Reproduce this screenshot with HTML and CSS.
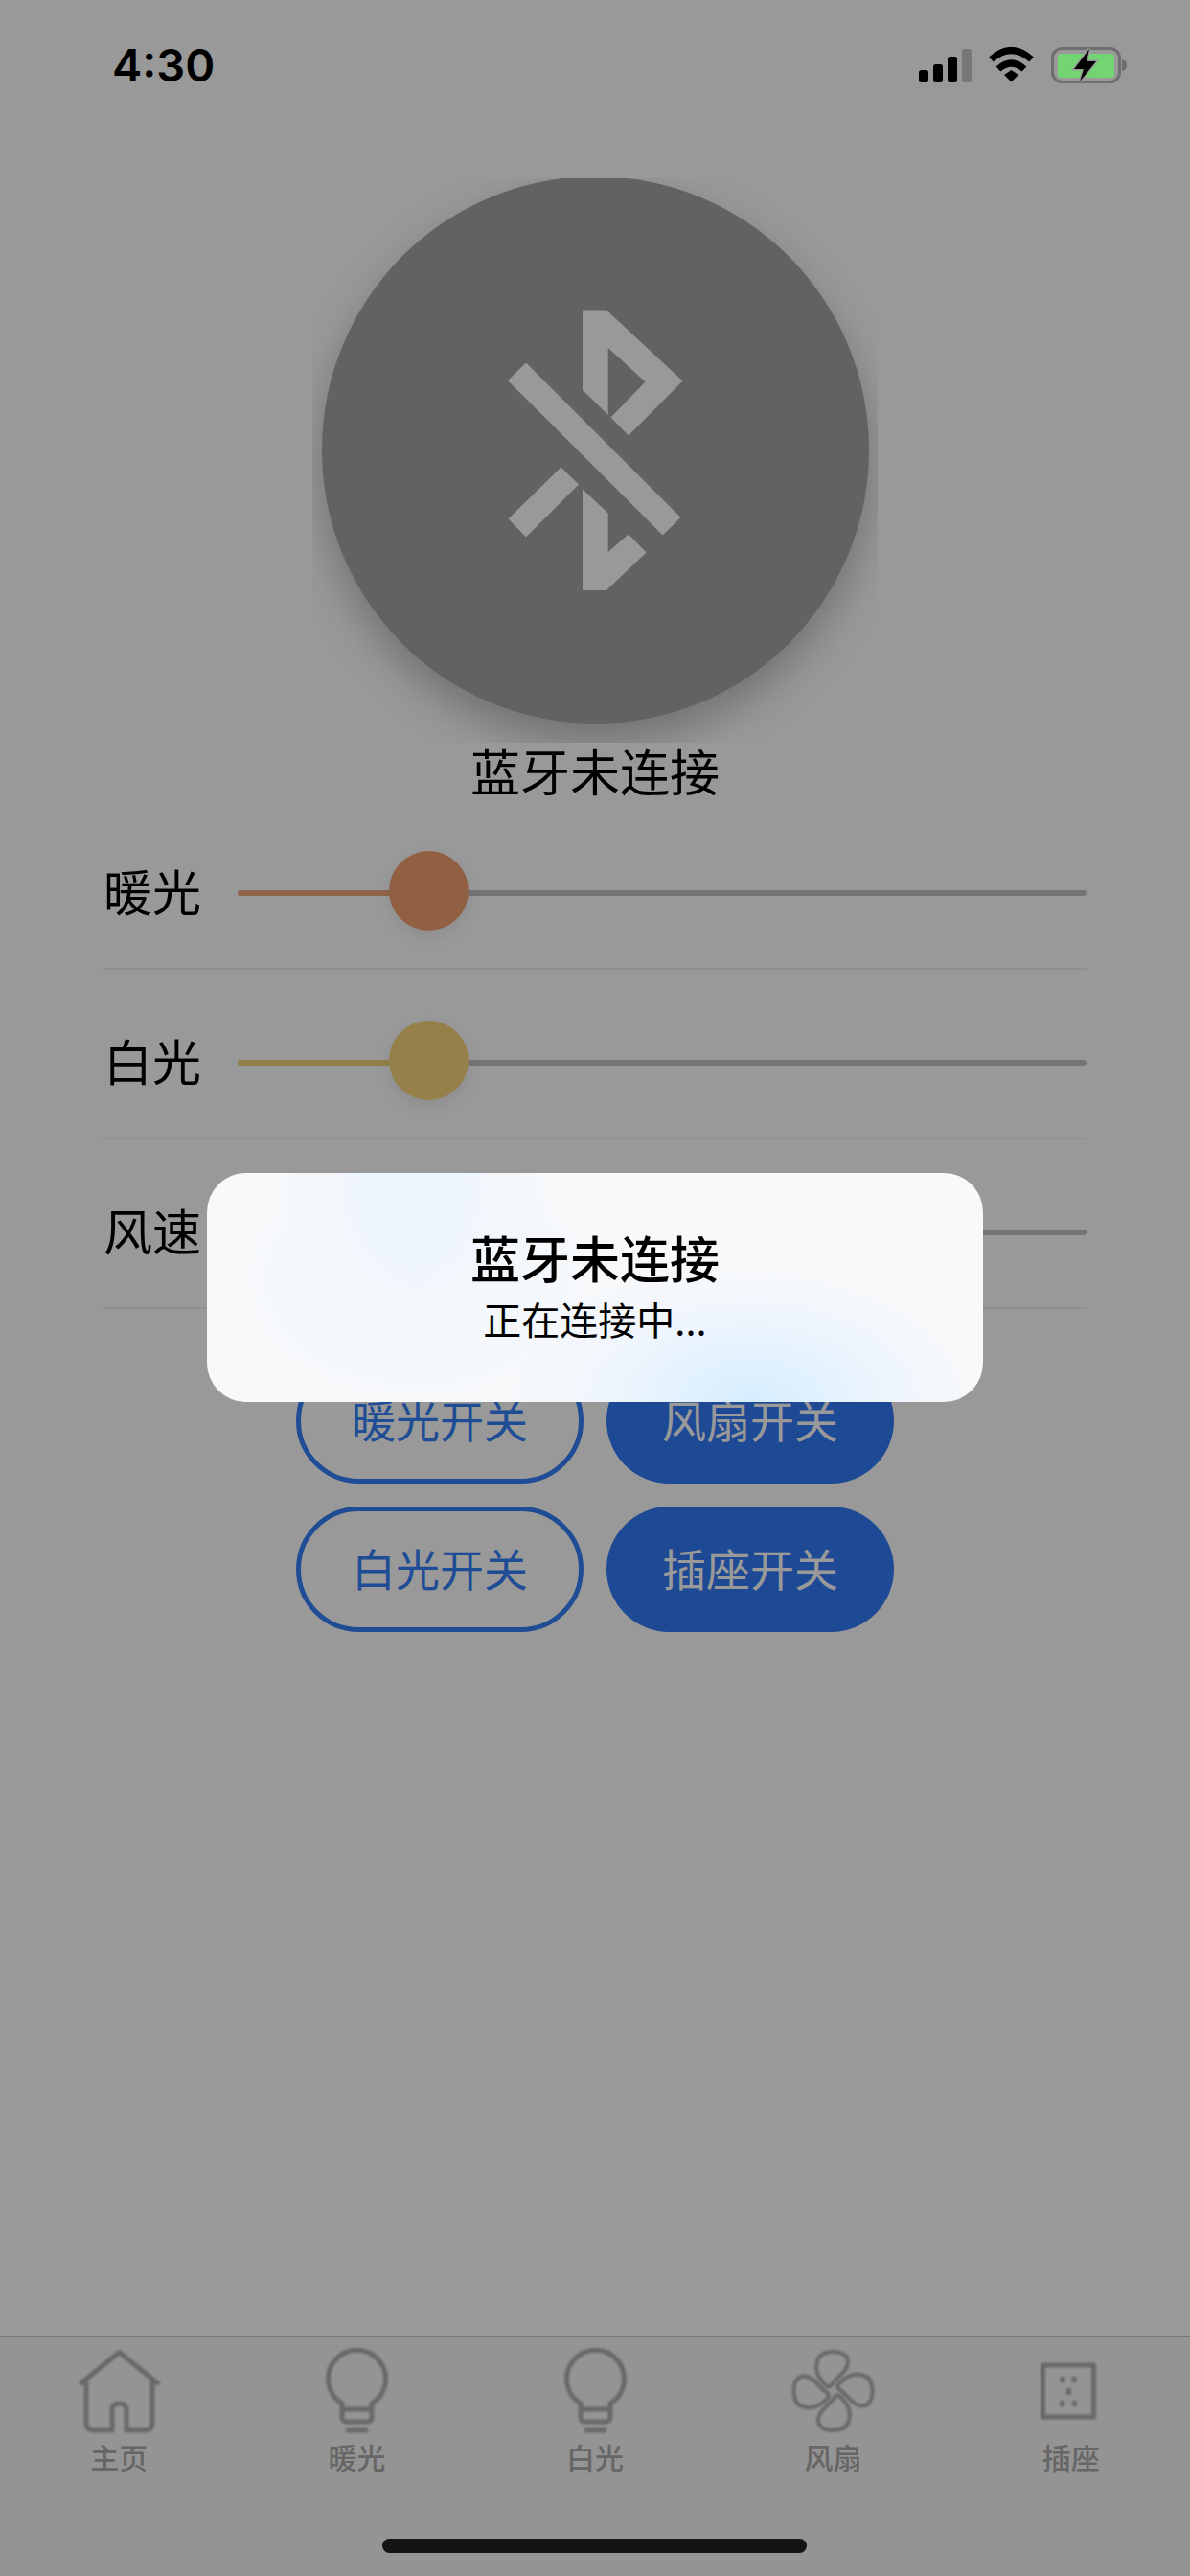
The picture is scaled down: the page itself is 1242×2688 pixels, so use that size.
FILE: index.html
```html
<!DOCTYPE html>
<html lang="zh-CN">
<head>
<meta charset="utf-8">
<title>蓝牙未连接</title>
<link rel="stylesheet" href="styles.css">
</head>
<body>
<div class="page">
  <header class="status">
    <span class="time">4:30</span>
    <div class="status-icons">
      <div class="signal">
        <i class="bar bar1"></i><i class="bar bar2"></i><i class="bar bar3"></i><i class="bar bar4"></i>
      </div>
      <svg class="wifi" viewBox="0 0 49 37" width="49" height="37">
        <path d="M3.5 13 Q24.5 -6 45.5 13" fill="none" stroke="#000" stroke-width="7"/>
        <path d="M11 23 Q24.5 11 38 23" fill="none" stroke="#000" stroke-width="7"/>
        <path d="M17 29 L24.5 24 L32 29 L24.5 36.5 Z" fill="#000"/>
      </svg>
      <svg class="battery" viewBox="0 0 80 38" width="80" height="38">
        <rect x="1.5" y="1.5" width="70" height="35" rx="10" fill="none" stroke="#6e6e6e" stroke-width="3"/>
        <rect x="7" y="7" width="59" height="25" rx="3.5" fill="#72d572"/>
        <path d="M74 13 Q79 14 79 19 Q79 24 74 25 Z" fill="#6e6e6e"/>
        <path d="M40 2 L24 23 H34 L30 36 L47 15 H37 Z" fill="#000" stroke="#999" stroke-width="3" paint-order="stroke"/>
      </svg>
    </div>
  </header>

  <main class="main">
    <div class="bt-clip">
      <div class="bt-circle">
        <svg class="bt-icon" viewBox="531 323 183 293" width="183" height="293">
          <path d="M609 323.5 H634 L713.5 397.5 L657 454.5 L638.5 435.5 L674.5 398.5 L635.7 363 V433 L609 407 Z"/>
          <path d="M550 378.5 L711.5 540 L692.7 558.5 L531 397 Z"/>
          <path d="M586.5 487.5 L605 505.5 L550 560.5 L531.5 541.5 Z"/>
          <path d="M609 510.5 L635.7 535.5 V576 L657 557.5 L675.5 576.5 L634 616 H609 Z"/>
        </svg>
      </div>
    </div>
    <h1 class="bt-title">蓝牙未连接</h1>

    <section class="sliders">
      <div class="row">
        <span class="row-label">暖光</span>
        <div class="track">
          <div class="fill fill-warm"></div>
          <div class="thumb thumb-warm"></div>
        </div>
      </div>
      <div class="row">
        <span class="row-label">白光</span>
        <div class="track">
          <div class="fill fill-white"></div>
          <div class="thumb thumb-white"></div>
        </div>
      </div>
      <div class="row">
        <span class="row-label">风速</span>
        <div class="track">
          <div class="fill fill-fan"></div>
          <div class="thumb thumb-fan"></div>
        </div>
      </div>
    </section>

    <section class="buttons">
      <button class="btn btn-outline">暖光开关</button>
      <button class="btn btn-solid">风扇开关</button>
      <button class="btn btn-outline">白光开关</button>
      <button class="btn btn-solid">插座开关</button>
    </section>
  </main>

  <nav class="tabs">
    <div class="tab">
      <svg class="tab-icon" viewBox="0 0 87 87" width="87" height="87">
        <path d="M2 36 L43.5 2.5 L85 36"/>
        <path d="M9 33 V76 Q9 84 17 84 H36 V63 Q36 56 43.5 56 Q51 56 51 63 V84 H70 Q78 84 78 76 V33"/>
      </svg>
      <span class="tab-label">主页</span>
    </div>
    <div class="tab">
      <svg class="tab-icon" viewBox="0 0 87 87" width="87" height="87">
        <path d="M28 56 A30 30 0 1 1 59 56 V70 Q59 75 54 75 H33 Q28 75 28 70 Z"/>
        <path d="M28 62 H59"/>
        <path d="M32 84 H55" stroke-width="5"/>
      </svg>
      <span class="tab-label">暖光</span>
    </div>
    <div class="tab">
      <svg class="tab-icon" viewBox="0 0 87 87" width="87" height="87">
        <path d="M28 56 A30 30 0 1 1 59 56 V70 Q59 75 54 75 H33 Q28 75 28 70 Z"/>
        <path d="M28 62 H59"/>
        <path d="M32 84 H55" stroke-width="5"/>
      </svg>
      <span class="tab-label">白光</span>
    </div>
    <div class="tab">
      <svg class="tab-icon tab-icon-thin" viewBox="0 0 87 87" width="87" height="87">
        <path d="M37 38 C29 31 24 22 27 12 C29 4 37 2 44 2 C53 2 60 6 59 14 C58 23 48 28 43 35 C41 38 39 39 37 38 Z"/>
        <path d="M37 38 C29 31 24 22 27 12 C29 4 37 2 44 2 C53 2 60 6 59 14 C58 23 48 28 43 35 C41 38 39 39 37 38 Z" transform="rotate(90 43.5 43)"/>
        <path d="M37 38 C29 31 24 22 27 12 C29 4 37 2 44 2 C53 2 60 6 59 14 C58 23 48 28 43 35 C41 38 39 39 37 38 Z" transform="rotate(180 43.5 43)"/>
        <path d="M37 38 C29 31 24 22 27 12 C29 4 37 2 44 2 C53 2 60 6 59 14 C58 23 48 28 43 35 C41 38 39 39 37 38 Z" transform="rotate(270 43.5 43)"/>
      </svg>
      <span class="tab-label">风扇</span>
    </div>
    <div class="tab">
      <svg class="tab-icon" viewBox="0 0 87 87" width="87" height="87">
        <rect x="14.5" y="16" width="53" height="54"/>
        <path d="M35 28 V34 M47 28 V34 M41.5 40 V47 M35 53 L34 59 M47 53 L48 59"/>
      </svg>
      <span class="tab-label">插座</span>
    </div>
  </nav>

  <div class="home-indicator"></div>
  <div class="scrim"></div>

  <aside class="toast">
    <div class="toast-title">蓝牙未连接</div>
    <div class="toast-text">正在连接中...</div>
  </aside>
</div>
</body>
</html>
```
FILE: styles.css
```css
* { box-sizing: border-box; }

html, body {
  margin: 0;
  padding: 0;
  background: #fff;
}

body {
  font-family: "Noto Sans CJK SC", "Noto Sans", sans-serif;
  color: #000;
}

.page {
  position: relative;
  width: 1242px;
  height: 2688px;
  overflow: hidden;
  display: flex;
  flex-direction: column;
  background: #fff;
}

/* Status bar sits above the dimming layer */
.status {
  position: relative;
  z-index: 3;
  height: 186px;
  flex: none;
  display: flex;
  justify-content: space-between;
  align-items: flex-start;
  padding: 49px 65px 0 117px;
}

.time {
  font-family: Inter, "Liberation Sans", sans-serif;
  font-weight: 600;
  font-size: 47px;
  line-height: 37px;
  color: #000;
}

.status-icons {
  display: flex;
  align-items: flex-start;
}

.signal {
  display: flex;
  align-items: flex-end;
  gap: 5px;
  height: 36px;
  margin-top: 1px;
  margin-right: 17px;
}

.bar {
  display: block;
  width: 10px;
  border-radius: 2.5px;
  background: #000;
}
.bar1 { height: 13px; }
.bar2 { height: 19px; }
.bar3 { height: 27px; }
.bar4 { height: 35px; background: #777; }

.wifi { margin-right: 17px; }

/* Bluetooth disc */
.main {
  flex: 1;
  display: flex;
  flex-direction: column;
}

.bt-clip {
  width: 590px;
  height: 589px;
  margin: 0 auto;
  overflow: hidden;
  display: flex;
  justify-content: center;
  flex: none;
}

.bt-circle {
  width: 571px;
  height: 571px;
  margin-top: -2px;
  flex: none;
  border-radius: 50%;
  background: #a3a3a3;
  box-shadow: 0 20px 44px rgba(0, 0, 0, 0.26);
  display: flex;
  align-items: center;
  justify-content: center;
}

.bt-icon { fill: #fff; }

.bt-title {
  margin: 0;
  height: 60px;
  font-size: 52px;
  font-weight: 400;
  line-height: 58px;
  text-align: center;
}

/* Sliders */
.sliders {
  padding: 0 108px;
}

.row {
  height: 177px;
  padding-top: 19px;
  display: flex;
  align-items: center;
  gap: 38px;
  border-bottom: 2px solid #eee;
}

.row-label {
  width: 102px;
  flex: none;
  font-size: 51px;
  line-height: 62px;
  padding-bottom: 7px;
  height: 69px;
}

.track {
  position: relative;
  flex: 1;
  height: 6px;
  border-radius: 3px;
  background: #c3c3c3;
}

.fill {
  width: 200px;
  height: 6px;
  border-radius: 3px;
}
.fill-warm { background: #f0a87c; }
.fill-white { background: #f2d878; }
.fill-fan { background: #327af7; }

.thumb {
  position: absolute;
  left: 158px;
  top: -41px;
  width: 83px;
  height: 83px;
  border-radius: 50%;
  box-shadow: 0 6px 16px rgba(0, 0, 0, 0.08);
}
.thumb-warm { background: #f2a070; }
.thumb-white { background: #f7d578; }
.thumb-fan { background: #327af7; }

/* Switch buttons */
.buttons {
  display: grid;
  grid-template-columns: 300px 300px;
  grid-auto-rows: 131px;
  gap: 24px;
  justify-content: center;
  margin-top: 51px;
}

.btn {
  margin: 0;
  padding: 0 0 5px;
  border-radius: 66px;
  font-family: inherit;
  font-size: 46px;
  line-height: 1;
}

.btn-outline {
  background: transparent;
  border: 5px solid #3580f8;
  color: #3580f8;
}

.btn-solid {
  background: #327af7;
  border: 0;
  color: #fff;
}

/* Tab bar */
.tabs {
  height: 250px;
  flex: none;
  display: flex;
  background: #f7f7f7;
  border-top: 1px solid #c6c6c6;
  padding-top: 13px;
}

.tab {
  flex: 1;
  display: flex;
  flex-direction: column;
  align-items: center;
}

.tab-icon {
  flex: none;
  overflow: visible;
  fill: none;
  stroke: #aeaeae;
  stroke-width: 5;
  stroke-linejoin: round;
  filter: blur(0.8px);
}

.tab-icon-thin { stroke-width: 4; }

.tab-label {
  margin-top: 4px;
  font-size: 30px;
  font-weight: 500;
  line-height: 40px;
  color: #aaa;
}

.home-indicator {
  position: absolute;
  left: 399px;
  top: 2649px;
  width: 443px;
  height: 15px;
  border-radius: 8px;
  background: #222;
}

/* Dimming layer and toast */
.scrim {
  position: absolute;
  inset: 0;
  z-index: 1;
  background: rgba(0, 0, 0, 0.4);
}

.toast {
  position: absolute;
  z-index: 2;
  left: 216px;
  top: 1224px;
  width: 810px;
  height: 239px;
  padding-bottom: 6px;
  border-radius: 41px;
  display: flex;
  flex-direction: column;
  align-items: center;
  justify-content: center;
  gap: 8px;
  background:
    radial-gradient(ellipse 250px 150px at 568px 239px, #d6edff 0%, #e4f2fe 35%, #f0f6fd 65%, rgba(244, 247, 252, 0) 100%),
    radial-gradient(ellipse 140px 170px at 214px 0, #ebf5fd 0%, rgba(236, 246, 253, 0) 100%),
    radial-gradient(ellipse 330px 230px at 220px 110px, rgba(242, 247, 252, 0.9) 0%, rgba(242, 247, 252, 0) 100%),
    #f9f9f9;
}

.toast-title {
  font-size: 52px;
  font-weight: 500;
  line-height: 62px;
}

.toast-text {
  font-size: 40px;
  line-height: 50px;
}
```
